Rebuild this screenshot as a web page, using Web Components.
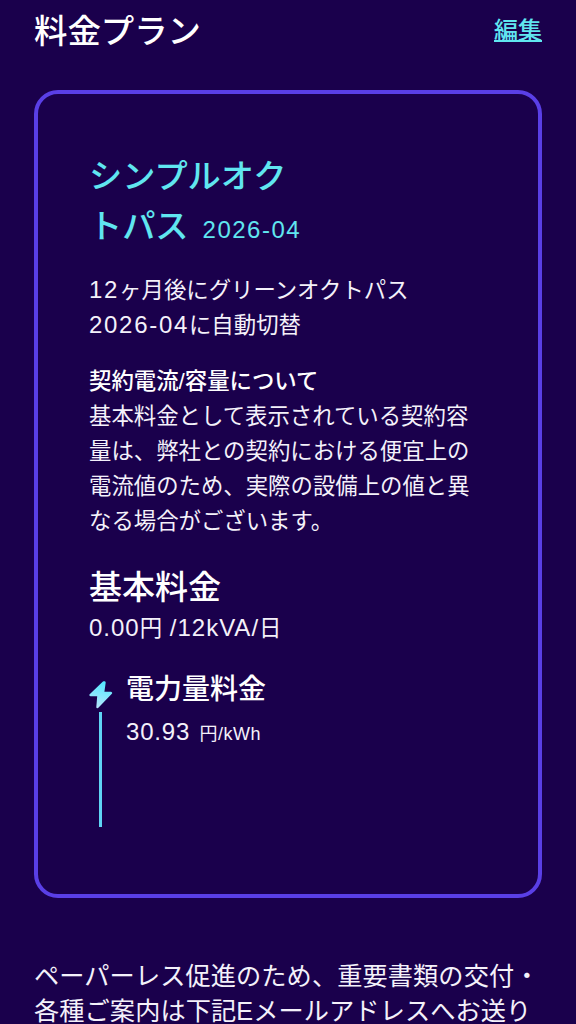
<!DOCTYPE html>
<html lang="ja">
<head>
<meta charset="utf-8">
<title>料金プラン</title>
<style>
html, body {
  margin: 0;
  height: 1024px;
  overflow: hidden;
  background: #1a004c;
}
body {
  color: #fff;
  font-family: "Liberation Sans", "Noto Sans CJK JP", sans-serif;
}
</style>
</head>
<body>
<plan-page>
  <page-header slot="header" title="料金プラン" action="編集"></page-header>
  <plan-card>
    <plan-name date="2026-04">シンプルオク<br>トパス</plan-name>
    <plan-note style="margin-top:18px;line-height:34px"><num-run>12</num-run>ヶ月後にグリーンオクトパス<br><num-run>2026-04</num-run>に自動切替</plan-note>
    <plan-note style="margin-top:21px" heading="契約電流/容量について">基本料金として表示されている契約容量は、弊社との契約における便宜上の電流値のため、実際の設備上の値と異なる場合がございます。</plan-note>
    <base-fee title="基本料金"><num-run style="--track:1px">0.00</num-run>円<num-run style="--track:1px">/12kVA/</num-run>日</base-fee>
    <unit-rate title="電力量料金" value="30.93" unit="円/kWh"></unit-rate>
  </plan-card>
  <p slot="footer">ペーパーレス促進のため、重要書類の交付・各種ご案内は下記Eメールアドレスへお送りします。</p>
</plan-page>

<script>
class PlanPage extends HTMLElement {
  constructor() {
    super();
    this.attachShadow({ mode: 'open' }).innerHTML = `
<style>
:host { display: block; padding: 0 34px; }
.footer { margin-top: 61px; }
::slotted(p) {
  margin: 0;
  font-size: 25.2px;
  letter-spacing: 0.1px;
  line-height: 35px;
  color: #f4f1fa;
}
</style>
<slot name="header"></slot>
<slot></slot>
<div class="footer"><slot name="footer"></slot></div>`;
  }
}

class PageHeader extends HTMLElement {
  constructor() {
    super();
    this.attachShadow({ mode: 'open' }).innerHTML = `
<style>
:host {
  display: flex;
  justify-content: space-between;
  align-items: center;
  height: 60px;
  margin-bottom: 30px;
}
h1 { margin: -4px 0 0; font-size: 33.4px; font-weight: 500; color: #fff; }
a { margin-top: -4px; font-size: 24px; font-weight: 500; color: #60e6f0; text-decoration: underline; text-underline-offset: 1px; }
</style>
<h1></h1><a href="#"></a>`;
    this.shadowRoot.querySelector('h1').textContent = this.getAttribute('title');
    this.shadowRoot.querySelector('a').textContent = this.getAttribute('action');
  }
}

class PlanCard extends HTMLElement {
  constructor() {
    super();
    this.attachShadow({ mode: 'open' }).innerHTML = `
<style>
:host {
  display: block;
  box-sizing: border-box;
  height: 808px;
  padding: 58px 51px 0;
  border: 4px solid #5a3fe6;
  border-radius: 24px;
}
</style>
<slot></slot>`;
  }
}

class PlanName extends HTMLElement {
  constructor() {
    super();
    this.attachShadow({ mode: 'open' }).innerHTML = `
<style>
:host { display: block; color: #60e6f0; font-size: 33.2px; line-height: 50px; font-weight: 500; }
span { margin-left: 14px; font-size: 24px; letter-spacing: 1.5px; font-weight: 400; }
</style>
<slot></slot><span></span>`;
    this.shadowRoot.querySelector('span').textContent = this.getAttribute('date');
  }
}

class NumRun extends HTMLElement {
  constructor() {
    super();
    this.attachShadow({ mode: 'open' }).innerHTML = `
<style>
:host { display: inline; font-size: 24px; letter-spacing: var(--track, 1.7px); }
</style>
<slot></slot>`;
  }
}

class PlanNote extends HTMLElement {
  constructor() {
    super();
    this.attachShadow({ mode: 'open' }).innerHTML = `
<style>
:host { display: block; font-size: 22.4px; line-height: 35px; color: #f4f1fa; }
h3 { margin: 0; font-size: 22.4px; font-weight: 500; line-height: 35px; color: #fff; }
h3:empty { display: none; }
</style>
<h3></h3><slot></slot>`;
    this.shadowRoot.querySelector('h3').textContent = this.getAttribute('heading') || '';
  }
}

class BaseFee extends HTMLElement {
  constructor() {
    super();
    this.attachShadow({ mode: 'open' }).innerHTML = `
<style>
:host { display: block; margin-top: 27px; color: #f4f1fa; }
h2 { margin: 0; font-size: 33px; font-weight: 500; line-height: 44px; color: #fff; }
div { font-size: 22.4px; line-height: 36px; }
</style>
<h2></h2><div><slot></slot></div>`;
    this.shadowRoot.querySelector('h2').textContent = this.getAttribute('title');
  }
}

class UnitRate extends HTMLElement {
  constructor() {
    super();
    this.attachShadow({ mode: 'open' }).innerHTML = `
<style>
:host { display: flex; gap: 13px; margin-top: 21px; color: #f4f1fa; }
.rail { display: flex; flex-direction: column; align-items: center; width: 26px; margin-left: -2px; }
.rail svg { display: block; width: 26px; height: 30px; margin-top: 11px; }
.line { width: 3px; height: 115px; margin-top: 3px; background: #5fd4f4; }
h2 { margin: 0; font-size: 28px; font-weight: 500; line-height: 44px; color: #fff; }
.price { margin-top: 2px; font-size: 24px; letter-spacing: 0.8px; line-height: 36px; }
.unit { margin-left: 2px; font-size: 18px; letter-spacing: 0.5px; }
</style>
<div class="rail">
  <svg viewBox="0 0 26 30">
    <defs><linearGradient id="bolt" gradientUnits="userSpaceOnUse" x1="17" y1="2" x2="10" y2="29">
      <stop offset="0" stop-color="#4fe8ff"/><stop offset="1" stop-color="#b8e6fb"/>
    </linearGradient></defs>
    <path d="M16.5 3.5 L3.5 16 H11.5 L10.5 28 L24 14 H16 L17.5 3.5 Z" fill="url(#bolt)" stroke="url(#bolt)" stroke-width="2.4" stroke-linejoin="round"/>
  </svg>
  <div class="line"></div>
</div>
<div>
  <h2></h2>
  <div class="price"><span class="num"></span> <span class="unit"></span></div>
</div>`;
    const root = this.shadowRoot;
    root.querySelector('h2').textContent = this.getAttribute('title');
    root.querySelector('.num').textContent = this.getAttribute('value');
    root.querySelector('.unit').textContent = this.getAttribute('unit');
  }
}

customElements.define('plan-page', PlanPage);
customElements.define('page-header', PageHeader);
customElements.define('plan-card', PlanCard);
customElements.define('plan-name', PlanName);
customElements.define('num-run', NumRun);
customElements.define('plan-note', PlanNote);
customElements.define('base-fee', BaseFee);
customElements.define('unit-rate', UnitRate);
</script>
</body>
</html>
